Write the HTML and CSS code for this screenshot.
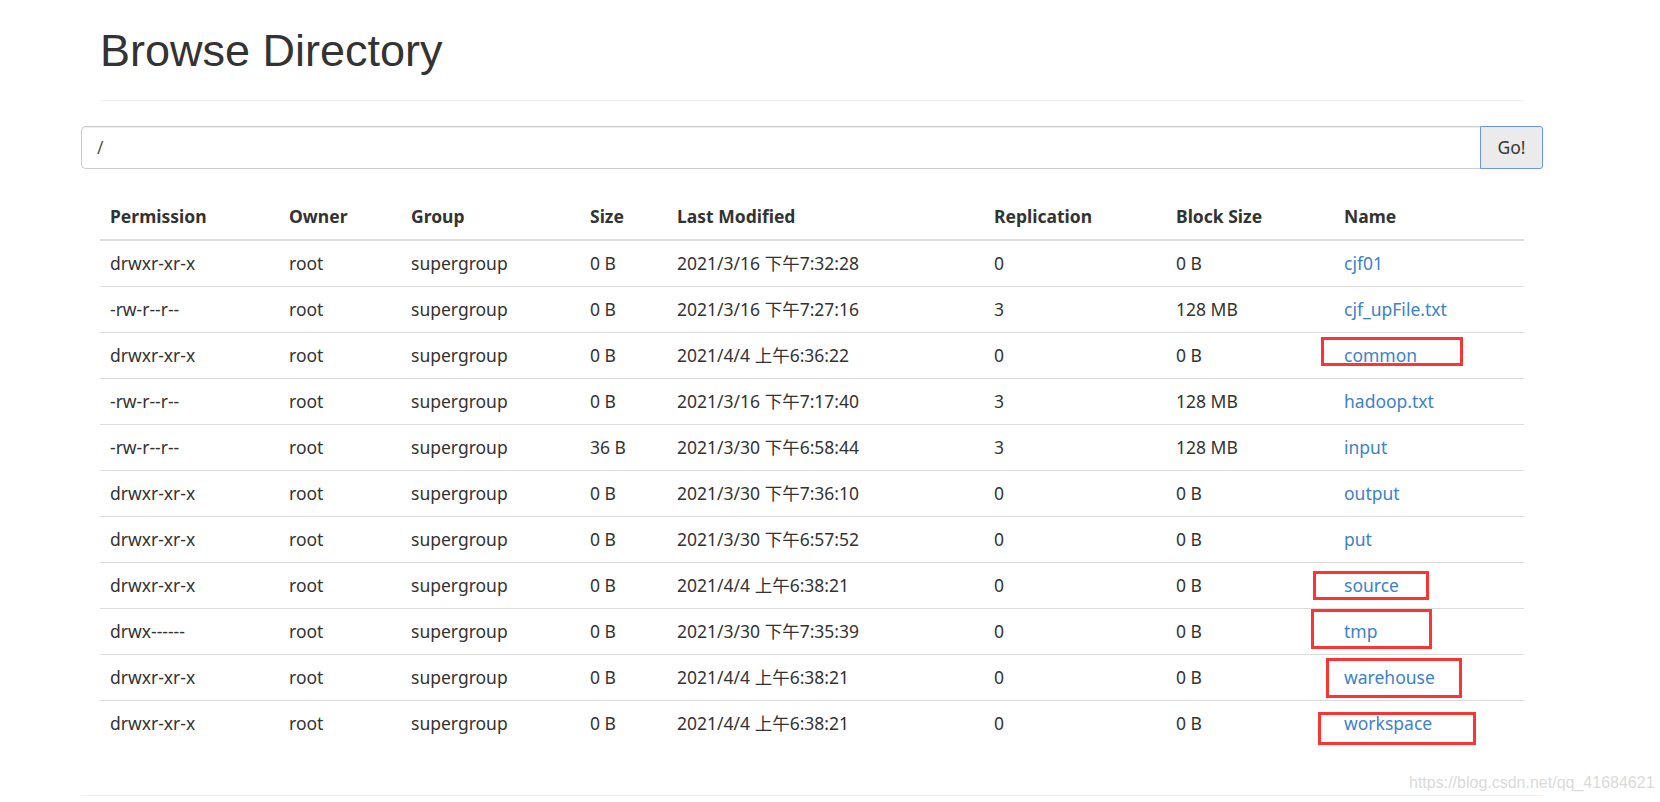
FILE: index.html
```html
<!DOCTYPE html>
<html>
<head>
<meta charset="utf-8">
<title>Browse Directory</title>
<link rel="stylesheet" href="styles.css">
</head>
<body>
<div class="container">
  <div class="page-header">
    <h1>Browse Directory</h1>
  </div>
  <form class="input-group">
    <input class="path-input" type="text" value="/">
    <button class="go-btn" type="button">Go!</button>
  </form>
  <table class="table">
    <colgroup>
      <col class="c-perm"><col class="c-owner"><col class="c-group"><col class="c-size">
      <col class="c-mod"><col class="c-rep"><col class="c-block"><col class="c-name">
    </colgroup>
    <thead>
      <tr><th>Permission</th><th>Owner</th><th>Group</th><th>Size</th><th>Last Modified</th><th>Replication</th><th>Block Size</th><th>Name</th></tr>
    </thead>
    <tbody>
      <tr><td>drwxr-xr-x</td><td>root</td><td>supergroup</td><td>0 B</td><td>2021/3/16 下午7:32:28</td><td>0</td><td>0 B</td><td><a href="#">cjf01</a></td></tr>
      <tr><td>-rw-r--r--</td><td>root</td><td>supergroup</td><td>0 B</td><td>2021/3/16 下午7:27:16</td><td>3</td><td>128 MB</td><td><a href="#">cjf_upFile.txt</a></td></tr>
      <tr><td>drwxr-xr-x</td><td>root</td><td>supergroup</td><td>0 B</td><td>2021/4/4 上午6:36:22</td><td>0</td><td>0 B</td><td><a href="#">common</a></td></tr>
      <tr><td>-rw-r--r--</td><td>root</td><td>supergroup</td><td>0 B</td><td>2021/3/16 下午7:17:40</td><td>3</td><td>128 MB</td><td><a href="#">hadoop.txt</a></td></tr>
      <tr><td>-rw-r--r--</td><td>root</td><td>supergroup</td><td>36 B</td><td>2021/3/30 下午6:58:44</td><td>3</td><td>128 MB</td><td><a href="#">input</a></td></tr>
      <tr><td>drwxr-xr-x</td><td>root</td><td>supergroup</td><td>0 B</td><td>2021/3/30 下午7:36:10</td><td>0</td><td>0 B</td><td><a href="#">output</a></td></tr>
      <tr><td>drwxr-xr-x</td><td>root</td><td>supergroup</td><td>0 B</td><td>2021/3/30 下午6:57:52</td><td>0</td><td>0 B</td><td><a href="#">put</a></td></tr>
      <tr><td>drwxr-xr-x</td><td>root</td><td>supergroup</td><td>0 B</td><td>2021/4/4 上午6:38:21</td><td>0</td><td>0 B</td><td><a href="#">source</a></td></tr>
      <tr><td>drwx------</td><td>root</td><td>supergroup</td><td>0 B</td><td>2021/3/30 下午7:35:39</td><td>0</td><td>0 B</td><td><a href="#">tmp</a></td></tr>
      <tr><td>drwxr-xr-x</td><td>root</td><td>supergroup</td><td>0 B</td><td>2021/4/4 上午6:38:21</td><td>0</td><td>0 B</td><td><a href="#">warehouse</a></td></tr>
      <tr><td>drwxr-xr-x</td><td>root</td><td>supergroup</td><td>0 B</td><td>2021/4/4 上午6:38:21</td><td>0</td><td>0 B</td><td><a href="#">workspace</a></td></tr>
    </tbody>
  </table>
  <hr class="footer-rule">
</div>
<div class="mark mark-common"></div>
<div class="mark mark-source"></div>
<div class="mark mark-tmp"></div>
<div class="mark mark-warehouse"></div>
<div class="mark mark-workspace"></div>
<div class="watermark">https://blog.csdn.net/qq_41684621</div>
</body>
</html>
```
FILE: styles.css
```css
html, body {
  margin: 0;
  padding: 0;
  background: #fff;
}
body {
  position: relative;
  width: 1660px;
  height: 802px;
  overflow: hidden;
  font-family: "Noto Sans", "Noto Sans CJK SC", sans-serif;
  font-size: 17.5px;
  color: #333;
}
.container {
  margin-left: 81px;
  width: 1462px;
}
.page-header {
  margin: 0 19px 25px 19px;
  padding-top: 26px;
  padding-bottom: 11px;
  border-bottom: 1px solid #eee;
}
.page-header h1 {
  margin: 0 0 13px 0;
  font-family: "Liberation Sans", Arial, sans-serif;
  font-weight: 400;
  font-size: 45px;
  line-height: 49.5px;
  color: #333;
}
.input-group {
  display: flex;
  margin: 0 0 25px 0;
  height: 43px;
}
.path-input {
  flex: 1;
  box-sizing: border-box;
  height: 43px;
  margin: 0;
  padding: 0 15px;
  border: 1px solid #ccc;
  border-right: 0;
  border-radius: 5px 0 0 5px;
  font-family: "Noto Sans", "Noto Sans CJK SC", sans-serif;
  font-size: 17.5px;
  color: #555;
  box-shadow: inset 0 1px 1px rgba(0,0,0,0.075);
  outline: none;
}
.go-btn {
  box-sizing: border-box;
  width: 63px;
  height: 43px;
  margin: 0;
  padding: 0;
  border: 1px solid #6a98e8;
  border-radius: 0 3px 3px 0;
  background: #ebebeb;
  font-family: "Noto Sans", "Noto Sans CJK SC", sans-serif;
  font-size: 17.5px;
  color: #333;
}
.table {
  margin: 0 19px 0 19px;
  width: 1424px;
  table-layout: fixed;
  border-collapse: collapse;
  border-spacing: 0;
}
.c-perm { width: 179px; }
.c-owner { width: 122px; }
.c-group { width: 179px; }
.c-size { width: 87px; }
.c-mod { width: 317px; }
.c-rep { width: 182px; }
.c-block { width: 168px; }
.c-name { width: 190px; }
.table th {
  padding: 10px;
  line-height: 25px;
  text-align: left;
  font-weight: 700;
  border-bottom: 2px solid #ddd;
  white-space: nowrap;
}
.table td {
  padding: 10px;
  line-height: 25px;
  border-top: 1px solid #ddd;
  white-space: nowrap;
}
.table tbody tr:first-child td {
  border-top: 0;
}
.table a {
  color: #3c82c8;
  text-decoration: none;
}
.footer-rule {
  margin: 49px 0 0 0;
  border: 0;
  border-top: 1px solid #eee;
  height: 0;
}
.mark {
  position: absolute;
  box-sizing: border-box;
  border: 3px solid #fb3434;
}
.mark-common { left: 1321px; top: 337px; width: 142px; height: 29px; }
.mark-source { left: 1313px; top: 571px; width: 116px; height: 29px; }
.mark-tmp { left: 1311px; top: 609px; width: 121px; height: 40px; }
.mark-warehouse { left: 1326px; top: 658px; width: 136px; height: 40px; }
.mark-workspace { left: 1318px; top: 712px; width: 158px; height: 33px; }
.watermark {
  position: absolute;
  left: 1409px;
  top: 774px;
  font-family: "Liberation Sans", Arial, sans-serif;
  font-size: 16px;
  line-height: 18px;
  color: rgba(180,180,180,0.5);
}
```
